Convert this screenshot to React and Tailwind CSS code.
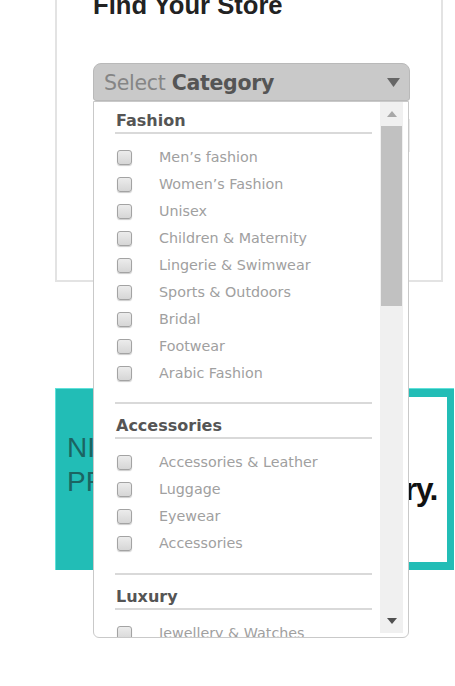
import React from "react";

function Checkbox() {
  return (
    <span className="ml-[2px] block h-[15px] w-[15px] shrink-0 rounded-[3px] border border-[#a3a3a3] bg-gradient-to-b from-[#ececec] to-[#d6d6d6] shadow-[0_1px_1px_rgba(0,0,0,0.2)]" />
  );
}

function Section({ title, items, first }) {
  return (
    <div className={first ? "pt-[9px] pb-[15px]" : "border-t-2 border-[#d9d9d9] pt-[12px] pb-[16px]"}>
      <div className="border-b-2 border-[#d9d9d9] pb-[1px] pl-[1px] text-[16px] font-bold leading-[20px] text-[#555]">
        {title}
      </div>
      <div className="pt-[10px]">
        {items.map((it) => (
          <div key={it} className="flex h-[27px] items-center">
            <Checkbox />
            <span className="ml-[27px] whitespace-nowrap text-[14.3px] text-[#a0a0a0]">{it}</span>
          </div>
        ))}
      </div>
    </div>
  );
}

export default function App() {
  const fashion = [
    "Men’s fashion",
    "Women’s Fashion",
    "Unisex",
    "Children & Maternity",
    "Lingerie & Swimwear",
    "Sports & Outdoors",
    "Bridal",
    "Footwear",
    "Arabic Fashion",
  ];
  const accessories = ["Accessories & Leather", "Luggage", "Eyewear", "Accessories"];
  const luxury = ["Jewellery & Watches", "Watches", "Fragrances"];

  return (
    <div className="h-[686px] w-[455px] overflow-hidden bg-white font-['Liberation_Sans',Arial,sans-serif]">
      {/* Store card */}
      <div className="ml-[55px] mt-[-30px] w-[388px] border-2 border-[#e3e3e3] pl-[36px] pt-[18px] pb-[128px]">
        <h2 className="text-[25.6px] font-bold leading-[30px] text-[#222]">Find Your Store</h2>
        <div className="relative z-10 mt-[43px] h-[38px] w-[317px]">
          <div className="flex h-[38px] items-center justify-between rounded-t-[8px] rounded-b-[3px] border border-[#b9b9b9] bg-[#c9c9c9] pl-[10px] pr-[9px] pt-[3px] font-['DejaVu_Sans',sans-serif] text-[20.5px] leading-none">
            <span className="tracking-[-0.3px]">
              <span className="text-[#858585]">Select </span>
              <span className="font-bold text-[#555]">Category</span>
            </span>
            <svg width="13" height="9" viewBox="0 0 13 9" className="mb-[2px]">
              <polygon points="0,0 13,0 6.5,9" fill="#666" />
            </svg>
          </div>
          {/* Dropdown panel */}
          <div className="absolute left-0 top-full flex h-[537px] w-[316px] overflow-hidden rounded-b-[6px] border border-[#c9c9c9] bg-white font-['DejaVu_Sans',sans-serif]">
            <div className="flex-1 overflow-hidden pl-[21px] pr-[8px]">
              <Section title="Fashion" items={fashion} first />
              <Section title="Accessories" items={accessories} />
              <Section title="Luxury" items={luxury} />
            </div>
            <div className="mb-[4px] flex w-[23px] flex-col bg-[#f0f0f0]">
              <div className="flex h-[24px] items-center justify-center">
                <svg width="10" height="6" viewBox="0 0 10 6">
                  <polygon points="0,6 10,6 5,0" fill="#a8a8a8" />
                </svg>
              </div>
              <div className="mx-[1px] h-[180px] bg-[#c1c1c1]" />
              <div className="flex-1" />
              <div className="flex h-[22px] items-center justify-center pb-[2px]">
                <svg width="10" height="6" viewBox="0 0 10 6">
                  <polygon points="0,0 10,0 5,6" fill="#505050" />
                </svg>
              </div>
            </div>
            <div className="w-[5px]" />
          </div>
        </div>
        <div className="mt-[18px] h-[33px] w-[317px] border border-[#e9e9e9]" />
      </div>

      {/* Teal banner */}
      <div className="ml-[55px] mt-[106px] flex h-[182px] w-[399px] border-l border-t border-[#5fe1d9] bg-[#22bdb6]">
        <div className="w-[160px] whitespace-nowrap pl-[11px] pt-[42px] text-[28px] leading-[34px] text-[#1b6462]">
          <div>NINE WEST</div>
          <div>PROMOTION</div>
        </div>
        <div className="my-[8px] mr-[7px] flex flex-1 items-center justify-end bg-white pr-[10px] pt-[18px]">
          <span className="text-[32px] font-bold tracking-[-1.5px] text-[#111]">Delivery.</span>
        </div>
      </div>
    </div>
  );
}
